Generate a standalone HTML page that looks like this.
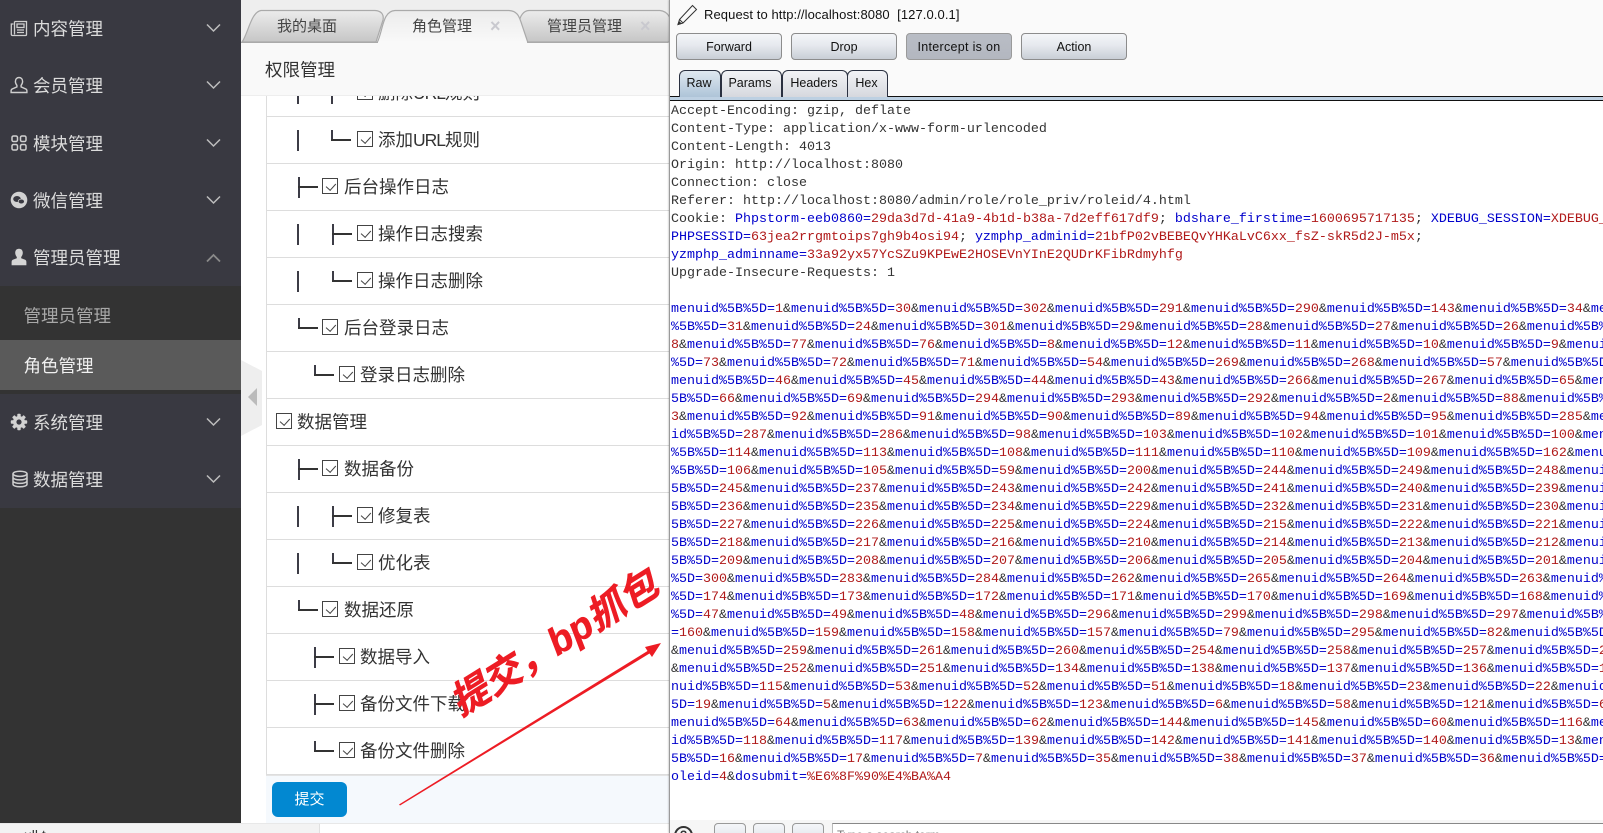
<!DOCTYPE html>
<html lang="zh-CN">
<head>
<meta charset="utf-8">
<title>权限管理</title>
<style>
html,body{margin:0;padding:0;width:1603px;height:833px;overflow:hidden;background:#fff}
*{box-sizing:border-box}
body{position:relative;font-family:"Liberation Sans","Noto Sans CJK SC",sans-serif;color:#333}
.abs{position:absolute}
#side{left:0;top:0;width:241px;height:823px;background:#333}
#sideTop{left:0;top:0;width:241px;height:286px;background:#393941}
#sideBot{left:0;top:394px;width:241px;height:114px;background:#393941}
#cur{left:0;top:340px;width:241px;height:50px;background:#5a5a5a}
.mi{position:absolute;left:33px;font-size:17.5px;line-height:26px;height:26px;color:#dcdcdc;white-space:nowrap}
.sub{position:absolute;left:23.5px;font-size:17.5px;line-height:26px;height:26px;white-space:nowrap}
.ic{position:absolute;left:10px;width:18px;height:18px}
.ch{position:absolute;left:206px;width:15px;height:10px}
#tabs{left:241px;top:0;width:428px;height:43px;background:#eee;overflow:hidden}
.tt{position:absolute;top:17px;font-size:15px;line-height:20px;color:#444;white-space:nowrap}
.x{position:absolute;top:16px;font-size:18px;line-height:20px;color:#c9c9cf;font-weight:bold}
#head{left:241px;top:43px;width:428px;height:53px;background:#f9f9f9;border-bottom:1px solid #eee;z-index:3}
#head span{position:absolute;left:24px;top:14px;font-size:17.5px;line-height:26px;color:#333}
#tree{left:241px;top:0;width:428px;height:823px;background:#fff;overflow:hidden}
#tbl{left:266px;top:96px;width:1px;height:679px;background:#ddd;z-index:1}
.r{position:absolute;left:266px;width:403px;height:47px;border-bottom:1px solid #ddd}
.r>*{position:absolute}
.v{top:13px;width:2px;height:21px;background:#3c3c46}
.v.s{height:11px}
.h{top:22px;width:20px;height:2px;background:#333}
.c{top:14px;width:16px;height:16px;border:1px solid #444;background:#fff}
.c::after{content:"";position:absolute;left:4.5px;top:1.5px;width:4.5px;height:8px;border-right:1.5px solid #444;border-bottom:1.5px solid #444;transform:rotate(42deg)}
.t{top:10px;font-size:17.5px;line-height:26px;color:#333;white-space:nowrap}
.t em{font-style:normal;letter-spacing:-1px}
#foot{left:266px;top:775px;width:403px;height:48px;background:#f5f9fd;border-top:1px solid #e4e4e4}
#btn{left:272px;top:782px;width:75px;height:35px;background:#0288d1;border-radius:6px;color:#fff;font-size:15px;line-height:35px;text-align:center}
#strip{left:0;top:823px;width:669px;height:10px;background:#fff;border-top:1px solid #e8e8e8;overflow:hidden}
#strip i{position:absolute;left:0;top:0;width:320px;height:10px;background:#f3f3f3;border-right:1px solid #e0e0e0}
#strip span{position:absolute;left:24px;top:3px;font-size:14px;line-height:16px;color:#333;font-style:normal}
#burp{left:669px;top:0;width:934px;height:833px;background:#fafafa;border-left:1px solid #9a9a9a;box-shadow:-1px 0 1px rgba(0,0,0,.15);overflow:hidden;z-index:4}
#burp .req{position:absolute;left:34px;top:6px;font-size:13px;line-height:18px;color:#111;white-space:pre;letter-spacing:.09px}
.b{position:absolute;top:33px;width:106px;height:27px;border:1px solid #8c8c8c;border-radius:4px;background:linear-gradient(#f4f6f9,#e6e9ee 45%,#c9ced6);font-size:12.5px;line-height:26px;text-align:center;color:#111}
.b.on{background:linear-gradient(#b9bdc5,#b3b7c0);border-color:#9a9a9a;letter-spacing:.3px}
.tb{position:absolute;top:70px;height:27px;border:1px solid #2a3040;border-bottom:none;border-radius:6px 6px 0 0;background:linear-gradient(#f2f3f6,#d6d8de);font-size:12.5px;line-height:25px;text-align:center;color:#111}
.tb.on{background:linear-gradient(#dfe8f0,#aec4d8)}
#lnA{left:0;top:96px;width:934px;height:1px;background:#111}
#lnB{left:0;top:97px;width:934px;height:3px;background:#bdd0e2}
#lnC{left:0;top:100px;width:934px;height:1px;background:#111}
#txt{left:0;top:101px;width:934px;height:722px;background:#fff}
#code{position:absolute;left:1px;top:1.5px;width:933px;margin:0;font:13.33px/18px "Liberation Mono",monospace;color:#0000cc;white-space:pre;overflow:hidden}
#code u{text-decoration:none;color:#b01a1a}
#code s{text-decoration:none;color:#333}
#bb{left:0;top:820px;width:934px;height:13px;background:#f6f6f6}
.sb{position:absolute;top:823px;width:32px;height:14px;border:1px solid #999;border-radius:4px;background:linear-gradient(#f4f6f9,#e6e9ee)}
#fld{left:162px;top:823px;width:772px;height:14px;background:#fff;border-top:1px solid #888;border-left:1px solid #bbb;font-size:12px;line-height:16px;color:#777;padding:3px 0 0 4px}
#help{left:4px;top:826px;width:19px;height:19px;border:2px solid #333;border-radius:50%;font-size:12px;line-height:14px;text-align:center;color:#333;font-weight:bold}
#note{left:436px;top:617px;width:240px;height:52px;font-size:38px;line-height:52px;font-weight:bold;font-style:italic;color:#ed1c24;-webkit-text-stroke:.6px #ed1c24;white-space:nowrap;transform:rotate(-32deg);transform-origin:50% 50%;z-index:3}
</style>
</head>
<body>

<div class="abs" id="side"></div>
<div class="abs" id="sideTop"></div>
<div class="abs" id="sideBot"></div>
<div class="abs" id="cur"></div>

<svg class="ic" style="top:19px" viewBox="0 0 18 18" fill="none" stroke="#cfcfcf" stroke-width="1.3"><path d="M4.5 2.5h12v13a1 1 0 0 1-1 1h-13a1.2 1.2 0 0 1-1.2-1.2V5h2.2"/><path d="M4.5 2.5v13"/><path d="M7 5h7v3.5H7zM7 11h7M7 13.5h7" /></svg>
<div class="mi" style="top:16px">内容管理</div>
<svg class="ch" style="top:23px" viewBox="0 0 15 10" fill="none" stroke="#bdbdbd" stroke-width="1.5"><path d="M1 1.5l6.5 6.500L14 1.5"/></svg>

<svg class="ic" style="top:76px" viewBox="0 0 18 18" fill="none" stroke="#cfcfcf" stroke-width="1.4"><path d="M9 1.5c-2.4 0-3.6 1.8-3.6 4 0 1.8.8 3 1.5 3.8v1.6L2.2 13c-.8.4-1.1 1-1.1 1.7V16.5h15.800v-1.800c0-.7-.3-1.300-1.100-1.700l-4.700-2.100V9.300c.7-.8 1.500-2 1.500-3.800 0-2.200-1.200-4-3.600-4z"/></svg>
<div class="mi" style="top:73px">会员管理</div>
<svg class="ch" style="top:80px" viewBox="0 0 15 10" fill="none" stroke="#bdbdbd" stroke-width="1.5"><path d="M1 1.5l6.5 6.500L14 1.500"/></svg>

<svg class="ic" style="top:134px" viewBox="0 0 18 18" fill="none" stroke="#cfcfcf" stroke-width="1.500"><rect x="2" y="2" width="5.500" height="5.500" rx="1.500"/><rect x="10.500" y="2" width="5.500" height="5.500" rx="1.500"/><rect x="2" y="10.500" width="5.500" height="5.500" rx="1.500"/><rect x="10.500" y="10.500" width="5.500" height="5.500" rx="1.500"/></svg>
<div class="mi" style="top:131px">模块管理</div>
<svg class="ch" style="top:138px" viewBox="0 0 15 10" fill="none" stroke="#bdbdbd" stroke-width="1.500"><path d="M1 1.500l6.500 6.500L14 1.500"/></svg>

<svg class="ic" style="top:191px" viewBox="0 0 18 18"><circle cx="9" cy="9" r="8.300" fill="#d2d2d2"/><ellipse cx="7" cy="8" rx="3.800" ry="3" fill="#393941"/><ellipse cx="11.300" cy="10.500" rx="3.100" ry="2.400" fill="#393941" stroke="#d2d2d2" stroke-width=".7"/></svg>
<div class="mi" style="top:188px">微信管理</div>
<svg class="ch" style="top:195px" viewBox="0 0 15 10" fill="none" stroke="#bdbdbd" stroke-width="1.500"><path d="M1 1.500l6.500 6.500L14 1.500"/></svg>

<svg class="ic" style="top:248px" viewBox="0 0 18 18"><path fill="#d4d4d4" d="M9 .8c-2.500 0-3.800 1.800-3.800 4 0 1.800.8 3.200 1.600 4.200v1.300l-4 1.500C1.800 12.300 1.600 13.200 1.600 14.500V17.200h14.800v-2.700c0-1.300-.2-2.200-1.200-2.700l-4-1.500V9c.8-1 1.600-2.400 1.600-4.200 0-2.200-1.300-4-3.800-4z"/></svg>
<div class="mi" style="top:245px">管理员管理</div>
<svg class="ch" style="top:253px" viewBox="0 0 15 10" fill="none" stroke="#8a8a8a" stroke-width="1.800"><path d="M1 8.500L7.500 2 14 8.500"/></svg>

<div class="sub" style="top:303px;color:#a8a8a8">管理员管理</div>
<div class="sub" style="top:353px;color:#f0f0f0">角色管理</div>

<svg class="ic" style="top:413px" viewBox="0 0 18 18"><g fill="#d2d2d2"><circle cx="9" cy="9" r="6"/><rect x="7.300" y=".8" width="3.400" height="16.400" rx=".8"/><rect x=".8" y="7.300" width="16.400" height="3.400" rx=".8"/><rect x="7.300" y=".8" width="3.400" height="16.400" rx=".8" transform="rotate(45 9 9)"/><rect x="7.300" y=".8" width="3.400" height="16.400" rx=".8" transform="rotate(-45 9 9)"/></g><circle cx="9" cy="9" r="2.600" fill="#393941"/></svg>
<div class="mi" style="top:410px">系统管理</div>
<svg class="ch" style="top:417px" viewBox="0 0 15 10" fill="none" stroke="#bdbdbd" stroke-width="1.500"><path d="M1 1.500l6.500 6.500L14 1.500"/></svg>

<svg class="ic" style="top:470px;left:11px" viewBox="0 0 18 18" fill="none" stroke="#cfcfcf" stroke-width="1.500"><ellipse cx="9" cy="3.800" rx="7" ry="2.600"/><path d="M2 3.800v10.400c0 1.500 3.100 2.600 7 2.600s7-1.100 7-2.600V3.800M2 7.300c0 1.500 3.100 2.600 7 2.600s7-1.100 7-2.600M2 10.800c0 1.500 3.100 2.600 7 2.600s7-1.100 7-2.600"/></svg>
<div class="mi" style="top:467px">数据管理</div>
<svg class="ch" style="top:474px" viewBox="0 0 15 10" fill="none" stroke="#bdbdbd" stroke-width="1.500"><path d="M1 1.500l6.500 6.500L14 1.500"/></svg>

<div class="abs" id="tree"></div>
<div class="abs" id="tbl"></div>

<div class="r" style="top:70px"><b class="v" style="left:31px"></b><b class="v" style="left:65px"></b><b class="h" style="left:65px"></b><b class="c" style="left:91px"></b><span class="t" style="left:112px">删除<em>URL</em>规则</span></div>
<div class="r" style="top:117px"><b class="v" style="left:31px"></b><b class="v s" style="left:65px"></b><b class="h" style="left:65px"></b><b class="c" style="left:91px"></b><span class="t" style="left:112px">添加<em>URL</em>规则</span></div>
<div class="r" style="top:164px"><b class="v" style="left:32px"></b><b class="h" style="left:32px"></b><b class="c" style="left:56px"></b><span class="t" style="left:78px">后台操作日志</span></div>
<div class="r" style="top:211px"><b class="v" style="left:31px"></b><b class="v" style="left:66px"></b><b class="h" style="left:66px"></b><b class="c" style="left:91px"></b><span class="t" style="left:112px">操作日志搜索</span></div>
<div class="r" style="top:258px"><b class="v" style="left:31px"></b><b class="v s" style="left:66px"></b><b class="h" style="left:66px"></b><b class="c" style="left:91px"></b><span class="t" style="left:112px">操作日志删除</span></div>
<div class="r" style="top:305px"><b class="v s" style="left:32px"></b><b class="h" style="left:32px"></b><b class="c" style="left:56px"></b><span class="t" style="left:78px">后台登录日志</span></div>
<div class="r" style="top:352px"><b class="v s" style="left:48px"></b><b class="h" style="left:48px"></b><b class="c" style="left:73px"></b><span class="t" style="left:94px">登录日志删除</span></div>
<div class="r" style="top:399px"><b class="c" style="left:10px"></b><span class="t" style="left:31px">数据管理</span></div>
<div class="r" style="top:446px"><b class="v" style="left:32px"></b><b class="h" style="left:32px"></b><b class="c" style="left:56px"></b><span class="t" style="left:78px">数据备份</span></div>
<div class="r" style="top:493px"><b class="v" style="left:31px"></b><b class="v" style="left:66px"></b><b class="h" style="left:66px"></b><b class="c" style="left:91px"></b><span class="t" style="left:112px">修复表</span></div>
<div class="r" style="top:540px"><b class="v" style="left:31px"></b><b class="v s" style="left:66px"></b><b class="h" style="left:66px"></b><b class="c" style="left:91px"></b><span class="t" style="left:112px">优化表</span></div>
<div class="r" style="top:587px"><b class="v s" style="left:32px"></b><b class="h" style="left:32px"></b><b class="c" style="left:56px"></b><span class="t" style="left:78px">数据还原</span></div>
<div class="r" style="top:634px"><b class="v" style="left:48px"></b><b class="h" style="left:48px"></b><b class="c" style="left:73px"></b><span class="t" style="left:94px">数据导入</span></div>
<div class="r" style="top:681px"><b class="v" style="left:48px"></b><b class="h" style="left:48px"></b><b class="c" style="left:73px"></b><span class="t" style="left:94px">备份文件下载</span></div>
<div class="r" style="top:728px"><b class="v s" style="left:48px"></b><b class="h" style="left:48px"></b><b class="c" style="left:73px"></b><span class="t" style="left:94px">备份文件删除</span></div>

<div class="abs" id="foot"></div>
<div class="abs" id="btn">提交</div>

<svg class="abs" style="left:241px;top:355px;z-index:2" width="24" height="85" viewBox="0 0 24 85"><path d="M0 5L21 16V70L0 81z" fill="#eee"/><path d="M16 33L7 42l9 9z" fill="#bbb"/></svg>

<div class="abs" id="tabs">
<svg width="428" height="43" style="position:absolute;left:0;top:0">
<defs>
<linearGradient id="g1" x1="0" y1="0" x2="0" y2="1"><stop offset="0" stop-color="#ececec"/><stop offset="1" stop-color="#c6c6c6"/></linearGradient>
<linearGradient id="g2" x1="0" y1="0" x2="0" y2="1"><stop offset="0" stop-color="#ececec"/><stop offset="1" stop-color="#f9f9f9"/></linearGradient>
</defs>
<path d="M1 42C7 34 10 12 20 10.500H134C141 11 143 15 142 20L135 42z" fill="url(#g1)" stroke="#aaa" stroke-width="1.200"/>
<path d="M281 42C275 30 277 11 288 10.500H419C425 11 428 15 430 20V42z" fill="url(#g1)" stroke="#aaa" stroke-width="1.200"/>
<path d="M0 42.500H427" stroke="#aaa" stroke-width="1.200"/>
<path d="M136 43C142 32 141 11 154 10.500H268C276 11 278 16 280 22L287 43z" fill="url(#g2)" stroke="#aaa" stroke-width="1.200"/>
<path d="M137 42.500H286" stroke="#f9f9f9" stroke-width="1.500"/>
</svg>
<span class="tt" style="left:36px">我的桌面</span>
<span class="tt" style="left:171px">角色管理</span>
<span class="x" style="left:249px">×</span>
<span class="tt" style="left:306px">管理员管理</span>
<span class="x" style="left:399px">×</span>
</div>

<div class="abs" id="head"><span>权限管理</span></div>

<div class="abs" id="strip"><i></i><span>ull t</span></div>

<svg class="abs" style="left:380px;top:630px;z-index:3" width="290" height="180" viewBox="380 630 290 180"><path d="M399 804.500L647.500 651L645 647L661 643L652 657L649.500 653.500L400 805.500z" fill="#ed1c24"/></svg>
<div class="abs" id="note">提交，bp抓包</div>

<div class="abs" id="burp">
<svg class="abs" style="left:6px;top:4px" width="22" height="22" viewBox="0 0 22 22" fill="none" stroke="#333" stroke-width="1"><path d="M16.500 1.500l4 4L7 19l-5 1.500L3.500 15.500z"/><path d="M3.500 15.500l3.500 3.500"/><path d="M2 20.500l1-3 2 2z" fill="#333"/></svg>
<div class="req">Request to http://localhost:8080  [127.0.0.1]</div>
<div class="b" style="left:6px">Forward</div>
<div class="b" style="left:121px">Drop</div>
<div class="b on" style="left:236px">Intercept is on</div>
<div class="b" style="left:351px">Action</div>
<div class="abs" id="lnA"></div>
<div class="abs" id="lnB"></div>
<div class="abs" id="lnC"></div>
<div class="tb on" style="left:9px;width:42px;z-index:2;padding-right:2px">Raw</div>
<div class="tb" style="left:51px;width:61px;padding-right:3px">Params</div>
<div class="tb" style="left:112px;width:66px;padding-right:2px">Headers</div>
<div class="tb" style="left:177px;width:41px;padding-right:2px">Hex</div>
<div class="abs" id="txt">
<pre id="code"><s>Accept-Encoding: gzip, deflate
Content-Type: application/x-www-form-urlencoded
Content-Length: 4013
Origin: http://localhost:8080
Connection: close
Referer: http://localhost:8080/admin/role/role_priv/roleid/4.html
Cookie: </s>Phpstorm-eeb0860=<u>29da3d7d-41a9-4b1d-b38a-7d2eff617df9</u><s>; </s>bdshare_firstime=<u>1600695717135</u><s>; </s>XDEBUG_SESSION=<u>XDEBUG_ECLIPSE</u>
PHPSESSID=<u>63jea2rrgmtoips7gh9b4osi94</u><s>; </s>yzmphp_adminid=<u>21bfP02vBEBEQvYHKaLvC6xx_fsZ-skR5d2J-m5x</u><s>;</s>
yzmphp_adminname=<u>33a92yx57YcSZu9KPEwE2HOSEVnYInE2QUDrKFibRdmyhfg</u>
<s>Upgrade-Insecure-Requests: 1</s>

menuid%5B%5D=<u>1</u><s>&amp;</s>menuid%5B%5D=<u>30</u><s>&amp;</s>menuid%5B%5D=<u>302</u><s>&amp;</s>menuid%5B%5D=<u>291</u><s>&amp;</s>menuid%5B%5D=<u>290</u><s>&amp;</s>menuid%5B%5D=<u>143</u><s>&amp;</s>menuid%5B%5D=<u>34</u><s>&amp;</s>menuid
%5B%5D=<u>31</u><s>&amp;</s>menuid%5B%5D=<u>24</u><s>&amp;</s>menuid%5B%5D=<u>301</u><s>&amp;</s>menuid%5B%5D=<u>29</u><s>&amp;</s>menuid%5B%5D=<u>28</u><s>&amp;</s>menuid%5B%5D=<u>27</u><s>&amp;</s>menuid%5B%5D=<u>26</u><s>&amp;</s>menuid%5B%5D=<u>7</u>
<u>8</u><s>&amp;</s>menuid%5B%5D=<u>77</u><s>&amp;</s>menuid%5B%5D=<u>76</u><s>&amp;</s>menuid%5B%5D=<u>8</u><s>&amp;</s>menuid%5B%5D=<u>12</u><s>&amp;</s>menuid%5B%5D=<u>11</u><s>&amp;</s>menuid%5B%5D=<u>10</u><s>&amp;</s>menuid%5B%5D=<u>9</u><s>&amp;</s>menuid%5B
%5D=<u>73</u><s>&amp;</s>menuid%5B%5D=<u>72</u><s>&amp;</s>menuid%5B%5D=<u>71</u><s>&amp;</s>menuid%5B%5D=<u>54</u><s>&amp;</s>menuid%5B%5D=<u>269</u><s>&amp;</s>menuid%5B%5D=<u>268</u><s>&amp;</s>menuid%5B%5D=<u>57</u><s>&amp;</s>menuid%5B%5D=
menuid%5B%5D=<u>46</u><s>&amp;</s>menuid%5B%5D=<u>45</u><s>&amp;</s>menuid%5B%5D=<u>44</u><s>&amp;</s>menuid%5B%5D=<u>43</u><s>&amp;</s>menuid%5B%5D=<u>266</u><s>&amp;</s>menuid%5B%5D=<u>267</u><s>&amp;</s>menuid%5B%5D=<u>65</u><s>&amp;</s>menuid
5B%5D=<u>66</u><s>&amp;</s>menuid%5B%5D=<u>69</u><s>&amp;</s>menuid%5B%5D=<u>294</u><s>&amp;</s>menuid%5B%5D=<u>293</u><s>&amp;</s>menuid%5B%5D=<u>292</u><s>&amp;</s>menuid%5B%5D=<u>2</u><s>&amp;</s>menuid%5B%5D=<u>88</u><s>&amp;</s>menuid%5B%5D
<u>3</u><s>&amp;</s>menuid%5B%5D=<u>92</u><s>&amp;</s>menuid%5B%5D=<u>91</u><s>&amp;</s>menuid%5B%5D=<u>90</u><s>&amp;</s>menuid%5B%5D=<u>89</u><s>&amp;</s>menuid%5B%5D=<u>94</u><s>&amp;</s>menuid%5B%5D=<u>95</u><s>&amp;</s>menuid%5B%5D=<u>285</u><s>&amp;</s>menuid
id%5B%5D=<u>287</u><s>&amp;</s>menuid%5B%5D=<u>286</u><s>&amp;</s>menuid%5B%5D=<u>98</u><s>&amp;</s>menuid%5B%5D=<u>103</u><s>&amp;</s>menuid%5B%5D=<u>102</u><s>&amp;</s>menuid%5B%5D=<u>101</u><s>&amp;</s>menuid%5B%5D=<u>100</u><s>&amp;</s>menuid
%5B%5D=<u>114</u><s>&amp;</s>menuid%5B%5D=<u>113</u><s>&amp;</s>menuid%5B%5D=<u>108</u><s>&amp;</s>menuid%5B%5D=<u>111</u><s>&amp;</s>menuid%5B%5D=<u>110</u><s>&amp;</s>menuid%5B%5D=<u>109</u><s>&amp;</s>menuid%5B%5D=<u>162</u><s>&amp;</s>menuid
%5B%5D=<u>106</u><s>&amp;</s>menuid%5B%5D=<u>105</u><s>&amp;</s>menuid%5B%5D=<u>59</u><s>&amp;</s>menuid%5B%5D=<u>200</u><s>&amp;</s>menuid%5B%5D=<u>244</u><s>&amp;</s>menuid%5B%5D=<u>249</u><s>&amp;</s>menuid%5B%5D=<u>248</u><s>&amp;</s>menuid
5B%5D=<u>245</u><s>&amp;</s>menuid%5B%5D=<u>237</u><s>&amp;</s>menuid%5B%5D=<u>243</u><s>&amp;</s>menuid%5B%5D=<u>242</u><s>&amp;</s>menuid%5B%5D=<u>241</u><s>&amp;</s>menuid%5B%5D=<u>240</u><s>&amp;</s>menuid%5B%5D=<u>239</u><s>&amp;</s>menuid
5B%5D=<u>236</u><s>&amp;</s>menuid%5B%5D=<u>235</u><s>&amp;</s>menuid%5B%5D=<u>234</u><s>&amp;</s>menuid%5B%5D=<u>229</u><s>&amp;</s>menuid%5B%5D=<u>232</u><s>&amp;</s>menuid%5B%5D=<u>231</u><s>&amp;</s>menuid%5B%5D=<u>230</u><s>&amp;</s>menuid
5B%5D=<u>227</u><s>&amp;</s>menuid%5B%5D=<u>226</u><s>&amp;</s>menuid%5B%5D=<u>225</u><s>&amp;</s>menuid%5B%5D=<u>224</u><s>&amp;</s>menuid%5B%5D=<u>215</u><s>&amp;</s>menuid%5B%5D=<u>222</u><s>&amp;</s>menuid%5B%5D=<u>221</u><s>&amp;</s>menuid
5B%5D=<u>218</u><s>&amp;</s>menuid%5B%5D=<u>217</u><s>&amp;</s>menuid%5B%5D=<u>216</u><s>&amp;</s>menuid%5B%5D=<u>210</u><s>&amp;</s>menuid%5B%5D=<u>214</u><s>&amp;</s>menuid%5B%5D=<u>213</u><s>&amp;</s>menuid%5B%5D=<u>212</u><s>&amp;</s>menuid
5B%5D=<u>209</u><s>&amp;</s>menuid%5B%5D=<u>208</u><s>&amp;</s>menuid%5B%5D=<u>207</u><s>&amp;</s>menuid%5B%5D=<u>206</u><s>&amp;</s>menuid%5B%5D=<u>205</u><s>&amp;</s>menuid%5B%5D=<u>204</u><s>&amp;</s>menuid%5B%5D=<u>201</u><s>&amp;</s>menuid
%5D=<u>300</u><s>&amp;</s>menuid%5B%5D=<u>283</u><s>&amp;</s>menuid%5B%5D=<u>284</u><s>&amp;</s>menuid%5B%5D=<u>262</u><s>&amp;</s>menuid%5B%5D=<u>265</u><s>&amp;</s>menuid%5B%5D=<u>264</u><s>&amp;</s>menuid%5B%5D=<u>263</u><s>&amp;</s>menuid%5B
%5D=<u>174</u><s>&amp;</s>menuid%5B%5D=<u>173</u><s>&amp;</s>menuid%5B%5D=<u>172</u><s>&amp;</s>menuid%5B%5D=<u>171</u><s>&amp;</s>menuid%5B%5D=<u>170</u><s>&amp;</s>menuid%5B%5D=<u>169</u><s>&amp;</s>menuid%5B%5D=<u>168</u><s>&amp;</s>menuid%5B
%5D=<u>47</u><s>&amp;</s>menuid%5B%5D=<u>49</u><s>&amp;</s>menuid%5B%5D=<u>48</u><s>&amp;</s>menuid%5B%5D=<u>296</u><s>&amp;</s>menuid%5B%5D=<u>299</u><s>&amp;</s>menuid%5B%5D=<u>298</u><s>&amp;</s>menuid%5B%5D=<u>297</u><s>&amp;</s>menuid%5B%5D=
=<u>160</u><s>&amp;</s>menuid%5B%5D=<u>159</u><s>&amp;</s>menuid%5B%5D=<u>158</u><s>&amp;</s>menuid%5B%5D=<u>157</u><s>&amp;</s>menuid%5B%5D=<u>79</u><s>&amp;</s>menuid%5B%5D=<u>295</u><s>&amp;</s>menuid%5B%5D=<u>82</u><s>&amp;</s>menuid%5B%5D=
<s>&amp;</s>menuid%5B%5D=<u>259</u><s>&amp;</s>menuid%5B%5D=<u>261</u><s>&amp;</s>menuid%5B%5D=<u>260</u><s>&amp;</s>menuid%5B%5D=<u>254</u><s>&amp;</s>menuid%5B%5D=<u>258</u><s>&amp;</s>menuid%5B%5D=<u>257</u><s>&amp;</s>menuid%5B%5D=<u>2</u>
<s>&amp;</s>menuid%5B%5D=<u>252</u><s>&amp;</s>menuid%5B%5D=<u>251</u><s>&amp;</s>menuid%5B%5D=<u>134</u><s>&amp;</s>menuid%5B%5D=<u>138</u><s>&amp;</s>menuid%5B%5D=<u>137</u><s>&amp;</s>menuid%5B%5D=<u>136</u><s>&amp;</s>menuid%5B%5D=<u>1</u>
nuid%5B%5D=<u>115</u><s>&amp;</s>menuid%5B%5D=<u>53</u><s>&amp;</s>menuid%5B%5D=<u>52</u><s>&amp;</s>menuid%5B%5D=<u>51</u><s>&amp;</s>menuid%5B%5D=<u>18</u><s>&amp;</s>menuid%5B%5D=<u>23</u><s>&amp;</s>menuid%5B%5D=<u>22</u><s>&amp;</s>menuid%5B%5D
5D=<u>19</u><s>&amp;</s>menuid%5B%5D=<u>5</u><s>&amp;</s>menuid%5B%5D=<u>122</u><s>&amp;</s>menuid%5B%5D=<u>123</u><s>&amp;</s>menuid%5B%5D=<u>6</u><s>&amp;</s>menuid%5B%5D=<u>58</u><s>&amp;</s>menuid%5B%5D=<u>121</u><s>&amp;</s>menuid%5B%5D=<u>6</u>
menuid%5B%5D=<u>64</u><s>&amp;</s>menuid%5B%5D=<u>63</u><s>&amp;</s>menuid%5B%5D=<u>62</u><s>&amp;</s>menuid%5B%5D=<u>144</u><s>&amp;</s>menuid%5B%5D=<u>145</u><s>&amp;</s>menuid%5B%5D=<u>60</u><s>&amp;</s>menuid%5B%5D=<u>116</u><s>&amp;</s>menuid
id%5B%5D=<u>118</u><s>&amp;</s>menuid%5B%5D=<u>117</u><s>&amp;</s>menuid%5B%5D=<u>139</u><s>&amp;</s>menuid%5B%5D=<u>142</u><s>&amp;</s>menuid%5B%5D=<u>141</u><s>&amp;</s>menuid%5B%5D=<u>140</u><s>&amp;</s>menuid%5B%5D=<u>13</u><s>&amp;</s>menuid
5B%5D=<u>16</u><s>&amp;</s>menuid%5B%5D=<u>17</u><s>&amp;</s>menuid%5B%5D=<u>7</u><s>&amp;</s>menuid%5B%5D=<u>35</u><s>&amp;</s>menuid%5B%5D=<u>38</u><s>&amp;</s>menuid%5B%5D=<u>37</u><s>&amp;</s>menuid%5B%5D=<u>36</u><s>&amp;</s>menuid%5B%5D=
oleid=<u>4</u><s>&amp;</s>dosubmit=<u>%E6%8F%90%E4%BA%A4</u></pre>
</div>
<div class="abs" id="bb"></div>
<div class="abs" id="help">?</div>
<div class="sb" style="left:44px"></div>
<div class="sb" style="left:83px"></div>
<div class="sb" style="left:122px"></div>
<div class="abs" id="fld">Type a search term</div>
</div>

</body>
</html>
